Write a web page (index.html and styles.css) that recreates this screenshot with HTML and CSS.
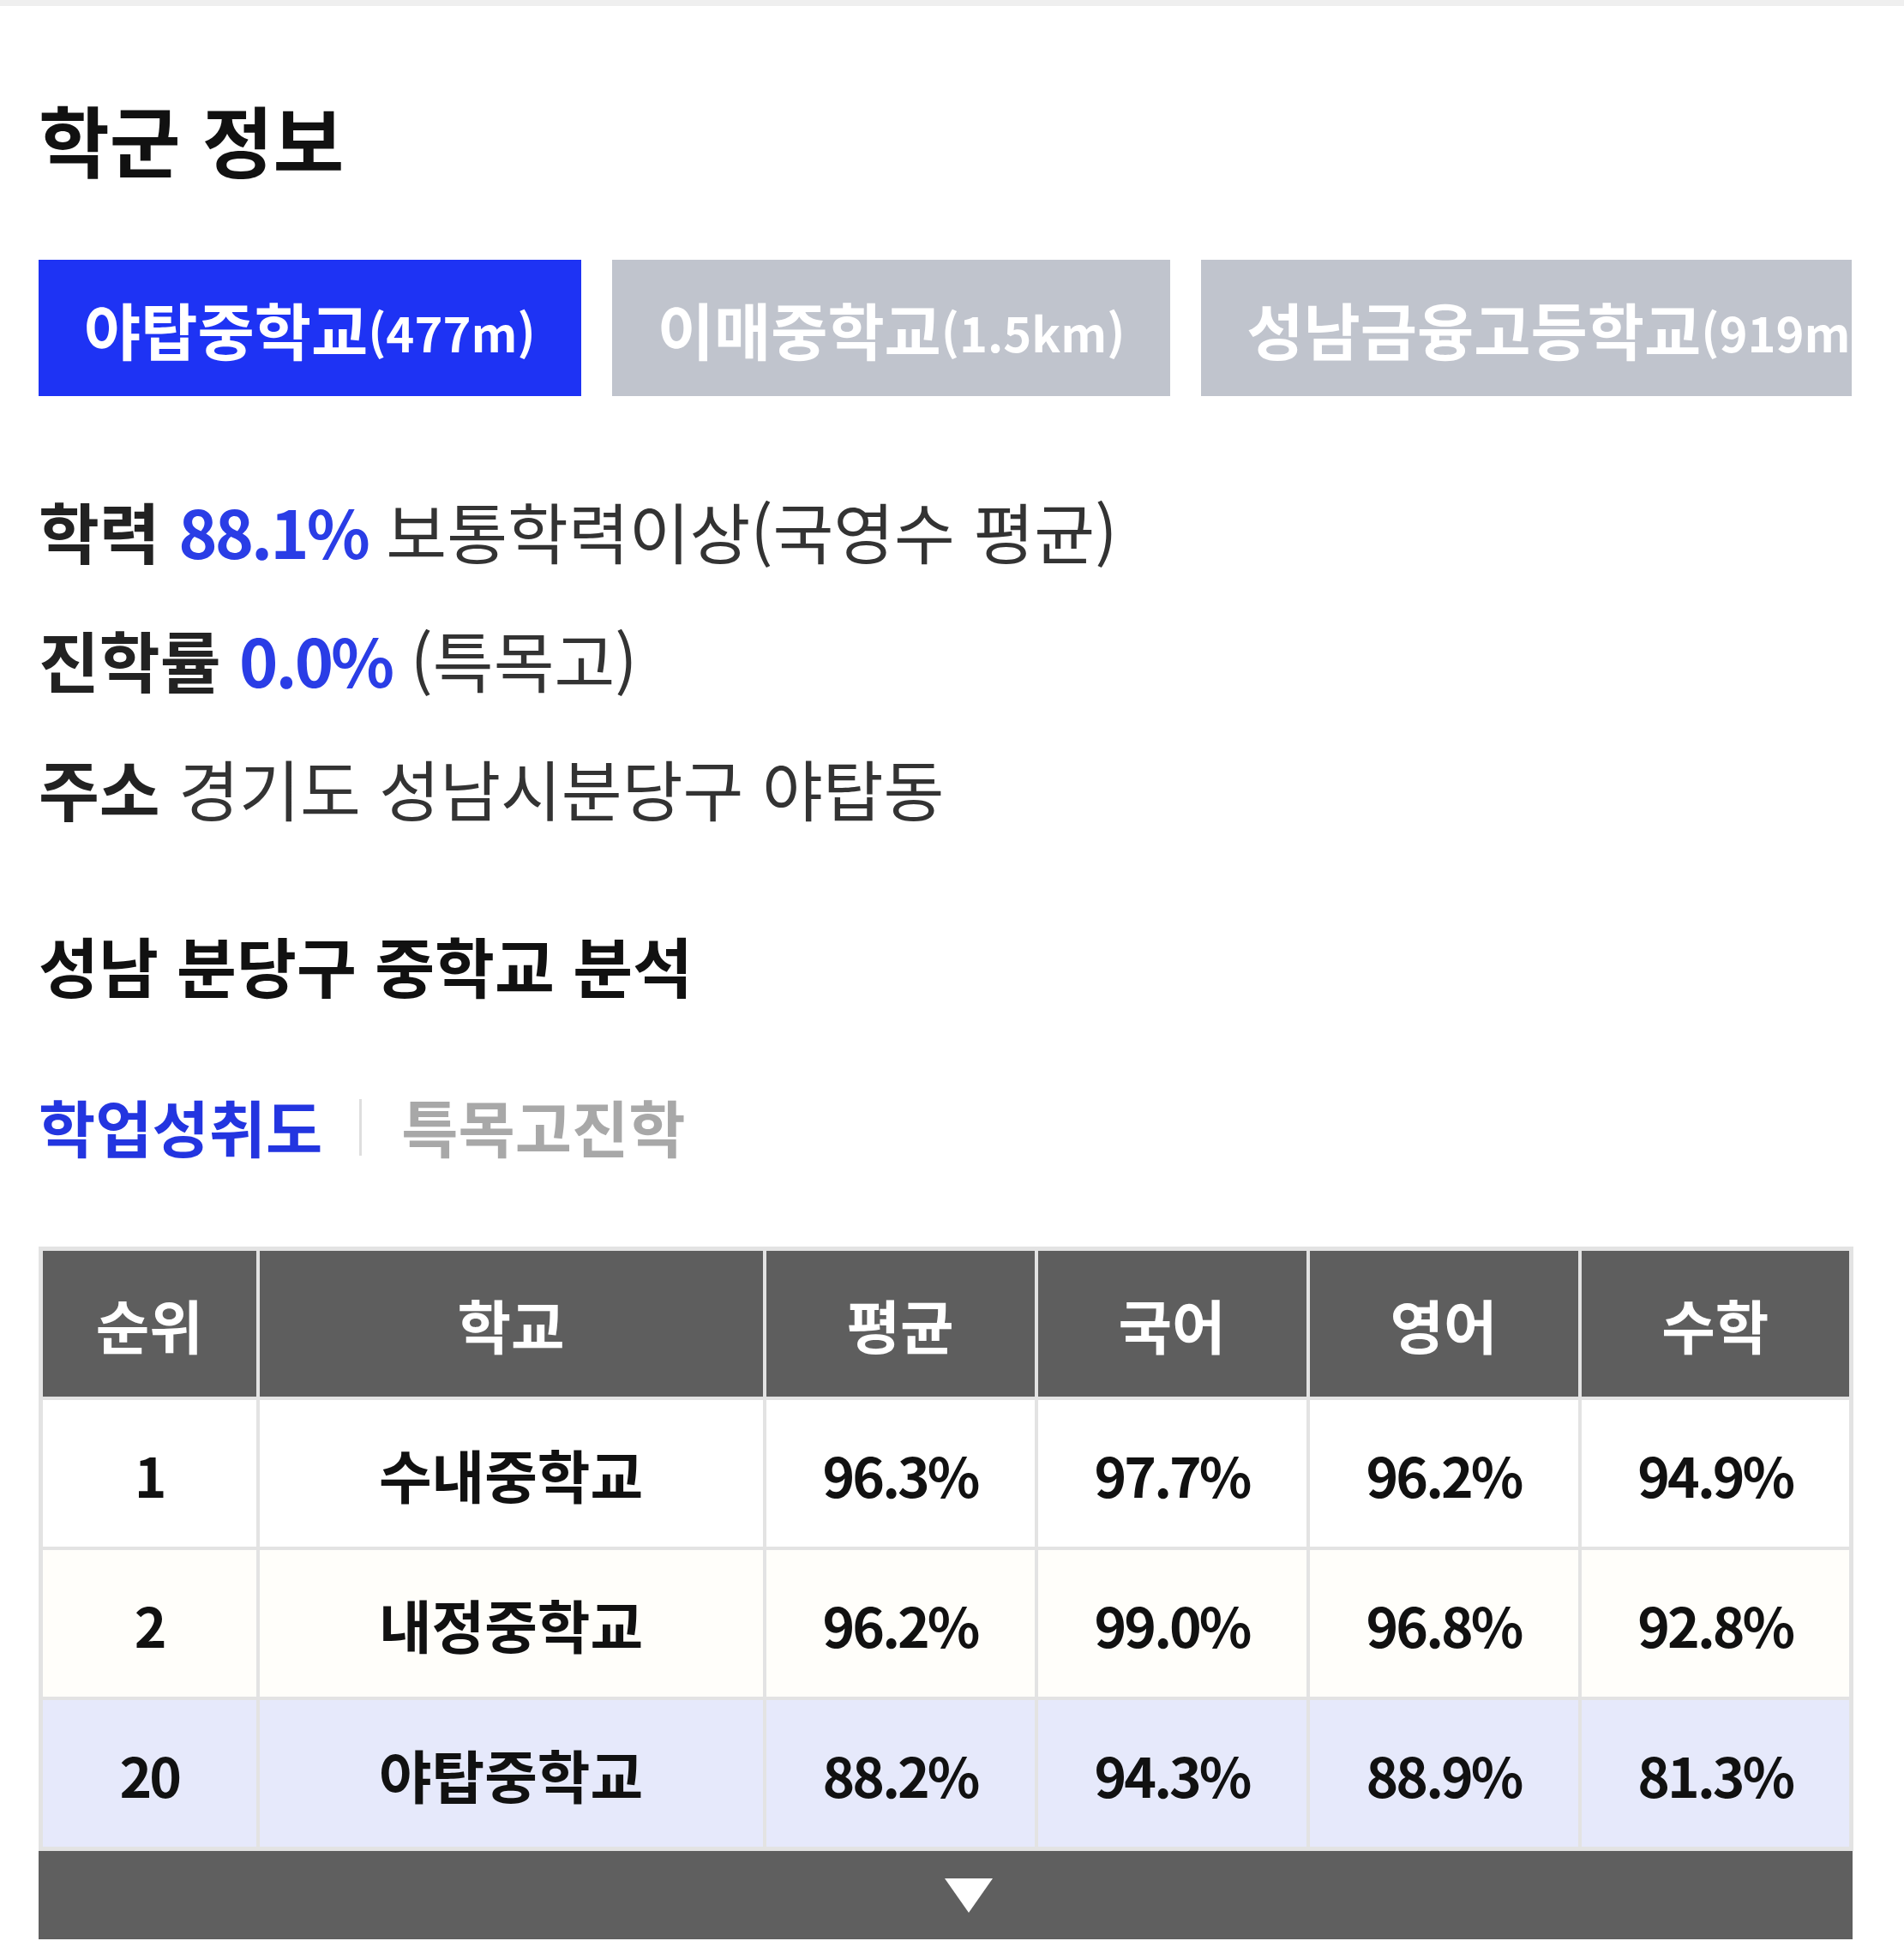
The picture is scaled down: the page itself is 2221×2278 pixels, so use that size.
FILE: index.html
```html
<!DOCTYPE html>
<html lang="ko">
<head>
  <meta charset="UTF-8">
  <meta name="viewport" content="width=device-width, initial-scale=1.0">
  <title>학군 정보</title>
  <link rel="stylesheet" href="styles.css">
</head>
<body>
  <div class="top-band"></div>

  <div class="page">
    <h1 class="title">학군 정보</h1>

    <div class="school-tabs">
      <button class="school-tab active">야탑중학교<span class="dist">(477m)</span></button>
      <button class="school-tab">이매중학교<span class="dist">(1.5km)</span></button>
      <button class="school-tab">성남금융고등학교<span class="dist">(919m)</span></button>
    </div>

    <div class="info">
      <p class="info-row"><b>학력</b> <span class="hl">88.1%</span> 보통학력이상(국영수 평균)</p>
      <p class="info-row"><b>진학률</b> <span class="hl">0.0%</span> (특목고)</p>
      <p class="info-row"><b>주소</b> 경기도 성남시분당구 야탑동</p>
    </div>

    <h2 class="section-title">성남 분당구 중학교 분석</h2>

    <div class="sub-tabs">
      <a class="sub-tab on">학업성취도</a>
      <span class="bar"></span>
      <a class="sub-tab">특목고진학</a>
    </div>

    <table class="rank">
      <colgroup>
        <col class="c-rank">
        <col class="c-school">
        <col class="c-score">
        <col class="c-score">
        <col class="c-score">
        <col class="c-score">
      </colgroup>
      <thead>
        <tr>
          <th>순위</th>
          <th>학교</th>
          <th>평균</th>
          <th>국어</th>
          <th>영어</th>
          <th>수학</th>
        </tr>
      </thead>
      <tbody>
        <tr>
          <td>1</td>
          <td class="name">수내중학교</td>
          <td>96.3%</td>
          <td>97.7%</td>
          <td>96.2%</td>
          <td>94.9%</td>
        </tr>
        <tr class="alt">
          <td>2</td>
          <td class="name">내정중학교</td>
          <td>96.2%</td>
          <td>99.0%</td>
          <td>96.8%</td>
          <td>92.8%</td>
        </tr>
        <tr class="mine">
          <td>20</td>
          <td class="name">야탑중학교</td>
          <td>88.2%</td>
          <td>94.3%</td>
          <td>88.9%</td>
          <td>81.3%</td>
        </tr>
      </tbody>
    </table>

    <div class="more">
      <svg width="56" height="40" viewBox="0 0 56 40"><polygon points="0,0 56,0 28,40" fill="#fff"/></svg>
    </div>
  </div>
</body>
</html>
```

FILE: styles.css
```css
body {
  margin: 0;
  background: #fff;
  font-family: "Noto Sans CJK KR", "Noto Sans", sans-serif;
  color: #222;
}

.top-band {
  height: 7px;
  background: #efefef;
}

.page {
  padding-left: 45px;
  width: 2116px;
}

.title {
  margin: 94px 0 0;
  font-size: 90px;
  line-height: 120px;
  font-weight: 700;
  color: #111;
}

/* school tabs, scroll sideways */
.school-tabs {
  display: flex;
  gap: 36px;
  margin-top: 82px;
  width: 2115px;
  overflow: hidden;
}

.school-tab {
  flex-shrink: 0;
  display: flex;
  align-items: center;
  height: 159px;
  padding: 0 53px;
  border: none;
  background-color: #c0c4cd;
  color: #fff;
  font-family: inherit;
  font-size: 72px;
  font-weight: 700;
  white-space: nowrap;
}

.school-tab.active {
  background-color: #1e33f4;
}

.dist {
  font-size: 56px;
  margin-top: 8px;
}

.info {
  margin-top: 82px;
}

.info-row {
  margin: 0;
  font-size: 77px;
  line-height: 150px;
  color: #333;
  white-space: nowrap;
}

.info-row b {
  color: #222;
  font-weight: 700;
}

.hl {
  color: #2a3de6;
  font-weight: 700;
  letter-spacing: -3px;
}

.section-title {
  margin: 76px 0 0;
  font-size: 76px;
  line-height: 110px;
  font-weight: 700;
  color: #111;
}

.sub-tabs {
  display: flex;
  align-items: center;
  margin-top: 82px;
  height: 100px;
}

.sub-tab {
  font-size: 72px;
  font-weight: 700;
  color: #a8a8a8;
}

.sub-tab.on {
  color: #2335e0;
}

.sub-tabs .bar {
  width: 3px;
  height: 66px;
  margin: 6px 46px 0 43px;
  background: #dedede;
}

/* ranking table */
.rank {
  margin-top: 92px;
  width: 2113px;
  table-layout: fixed;
  border-collapse: collapse;
  border: 5px solid #e3e3e3;
}

.c-rank { width: 253px; }
.c-school { width: 591px; }
.c-score { width: 317px; }

.rank th, .rank td {
  border: 4px solid #e3e3e3;
  text-align: center;
  padding: 0;
}

.rank th {
  height: 170px;
  background: #5e5e5e;
  color: #fff;
  font-size: 68px;
  font-weight: 700;
}

.rank td {
  height: 171px;
  font-size: 64px;
  font-weight: 700;
  color: #111;
  letter-spacing: -3px;
}

.rank td.name {
  font-size: 67px;
  letter-spacing: 0;
}

.rank tr.alt td {
  background: #fffefa;
}

.rank tr.mine td {
  background: #e6e9fb;
}

.more {
  display: flex;
  align-items: center;
  justify-content: center;
  height: 103px;
  padding-left: 54px;
  background: #5f5f5f;
  box-sizing: border-box;
}
```
